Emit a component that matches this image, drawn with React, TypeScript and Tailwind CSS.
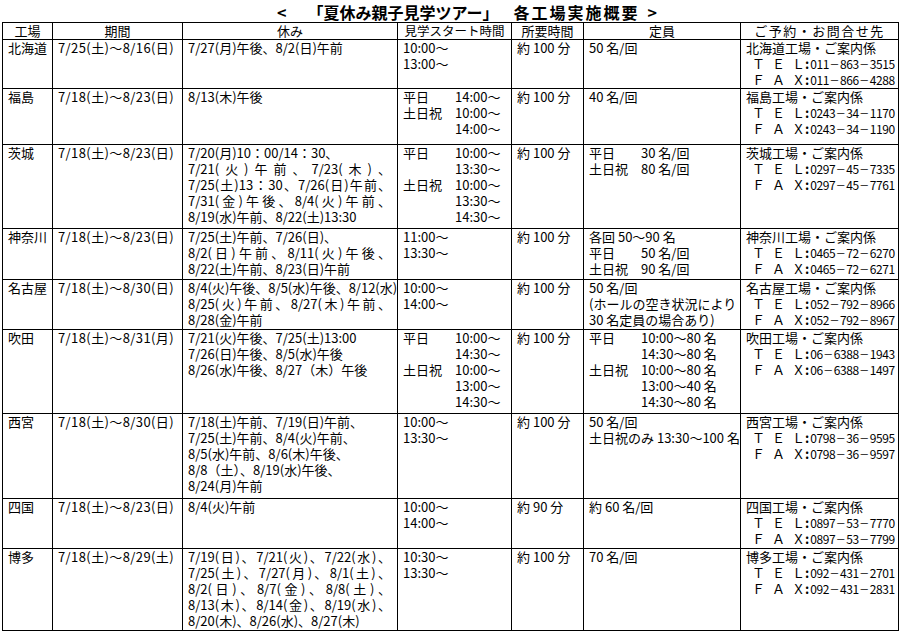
import React from "react";

type Pair = [string, string];
type HL = { t: string; j?: boolean };

interface Row {
  name: string;
  period: string;
  hol: HL[];
  times: (string | Pair)[];
  dur: string;
  cap: (string | Pair)[];
  co: [string, string, string];
  hc: string;
}

const rows: Row[] = [
  {
    name: "北海道",
    period: "7/25(土)～8/16(日)",
    hol: [{ t: "7/27(月)午後、8/2(日)午前" }],
    times: ["10:00～", "13:00～"],
    dur: "約 100 分",
    cap: ["50 名/回"],
    co: ["北海道工場・ご案内係", "011－863－3515", "011－866－4288"],
    hc: "h-[49px]",
  },
  {
    name: "福島",
    period: "7/18(土)～8/23(日)",
    hol: [{ t: "8/13(木)午後" }],
    times: [["平日", "14:00～"], ["土日祝", "10:00～"], ["", "14:00～"]],
    dur: "約 100 分",
    cap: ["40 名/回"],
    co: ["福島工場・ご案内係", "0243－34－1170", "0243－34－1190"],
    hc: "h-[56px]",
  },
  {
    name: "茨城",
    period: "7/18(土)～8/23(日)",
    hol: [
      { t: "7/20(月)10：00/14：30、" },
      { t: "7/21(火)午前、7/23(木)、", j: true },
      { t: "7/25(土)13：30、7/26(日)午前、", j: true },
      { t: "7/31(金)午後、8/4(火)午前、", j: true },
      { t: "8/19(水)午前、8/22(土)13:30" },
    ],
    times: [["平日", "10:00～"], ["", "13:30～"], ["土日祝", "10:00～"], ["", "13:30～"], ["", "14:30～"]],
    dur: "約 100 分",
    cap: [["平日", "30 名/回"], ["土日祝", "80 名/回"]],
    co: ["茨城工場・ご案内係", "0297－45－7335", "0297－45－7761"],
    hc: "h-[84px]",
  },
  {
    name: "神奈川",
    period: "7/18(土)～8/23(日)",
    hol: [
      { t: "7/25(土)午前、7/26(日)、" },
      { t: "8/2(日)午前、8/11(火)午後、", j: true },
      { t: "8/22(土)午前、8/23(日)午前" },
    ],
    times: ["11:00～", "13:30～"],
    dur: "約 100 分",
    cap: ["各回 50～90 名", ["平日", "50 名/回"], ["土日祝", "90 名/回"]],
    co: ["神奈川工場・ご案内係", "0465－72－6270", "0465－72－6271"],
    hc: "h-[51px]",
  },
  {
    name: "名古屋",
    period: "7/18(土)～8/30(日)",
    hol: [
      { t: "8/4(火)午後、8/5(水)午後、8/12(水)" },
      { t: "8/25(火)午前、8/27(木)午前、", j: true },
      { t: "8/28(金)午前" },
    ],
    times: ["10:00～", "14:00～"],
    dur: "約 100 分",
    cap: ["50 名/回", "(ホールの空き状況により", "30 名定員の場合あり)"],
    co: ["名古屋工場・ご案内係", "052－792－8966", "052－792－8967"],
    hc: "h-[50px]",
  },
  {
    name: "吹田",
    period: "7/18(土)～8/31(月)",
    hol: [
      { t: "7/21(火)午後、7/25(土)13:00" },
      { t: "7/26(日)午後、8/5(水)午後" },
      { t: "8/26(水)午後、8/27（木）午後" },
    ],
    times: [["平日", "10:00～"], ["", "14:30～"], ["土日祝", "10:00～"], ["", "13:00～"], ["", "14:30～"]],
    dur: "約 100 分",
    cap: [["平日", "10:00～80 名"], ["", "14:30～80 名"], ["土日祝", "10:00～80 名"], ["", "13:00～40 名"], ["", "14:30～80 名"]],
    co: ["吹田工場・ご案内係", "06－6388－1943", "06－6388－1497"],
    hc: "h-[84px]",
  },
  {
    name: "西宮",
    period: "7/18(土)～8/30(日)",
    hol: [
      { t: "7/18(土)午前、7/19(日)午前、" },
      { t: "7/25(土)午前、8/4(火)午前、" },
      { t: "8/5(水)午前、8/6(木)午後、" },
      { t: "8/8（土）、8/19(水)午後、" },
      { t: "8/24(月)午前" },
    ],
    times: ["10:00～", "13:30～"],
    dur: "約 100 分",
    cap: ["50 名/回", "土日祝のみ 13:30～100 名"],
    co: ["西宮工場・ご案内係", "0798－36－9595", "0798－36－9597"],
    hc: "h-[85px]",
  },
  {
    name: "四国",
    period: "7/18(土)～8/23(日)",
    hol: [{ t: "8/4(火)午前" }],
    times: ["10:00～", "14:00～"],
    dur: "約 90 分",
    cap: ["約 60 名/回"],
    co: ["四国工場・ご案内係", "0897－53－7770", "0897－53－7799"],
    hc: "h-[50px]",
  },
  {
    name: "博多",
    period: "7/18(土)～8/29(土)",
    hol: [
      { t: "7/19(日)、7/21(火)、7/22(水)、", j: true },
      { t: "7/25(土)、7/27(月)、8/1(土)、", j: true },
      { t: "8/2(日)、8/7(金)、8/8(土)、", j: true },
      { t: "8/13(木)、8/14(金)、8/19(水)、", j: true },
      { t: "8/20(木)、8/26(水)、8/27(木)" },
    ],
    times: ["10:30～", "13:30～"],
    dur: "約 100 分",
    cap: ["70 名/回"],
    co: ["博多工場・ご案内係", "092－431－2701", "092－431－2831"],
    hc: "h-[82px]",
  },
];

function Lines({ items }: { items: (string | Pair)[] }) {
  return (
    <div className="grid grid-cols-[52px_1fr]">
      {items.map((it, i) =>
        typeof it === "string" ? (
          <div key={i} className="col-span-2">
            {it}
          </div>
        ) : (
          <React.Fragment key={i}>
            <div>{it[0]}</div>
            <div>{it[1]}</div>
          </React.Fragment>
        )
      )}
    </div>
  );
}

function Phone({ n }: { n: string }) {
  const parts = n.split("－");
  return (
    <span className="text-[12px] inline-flex items-center">
      {parts.map((p, i) => (
        <React.Fragment key={i}>
          {i > 0 && (
            <span className="inline-flex w-[11px] justify-center text-[10px]">－</span>
          )}
          <span className="tracking-[-0.4px]">{p}</span>
        </React.Fragment>
      ))}
    </span>
  );
}

function Contact({ co }: { co: [string, string, string] }) {
  return (
    <div>
      <div>{co[0]}</div>
      <div className="flex items-center h-[16px]">
        <span className="ml-[6px] tracking-[7px]">ＴＥ</span>
        <span>Ｌ</span>
        <span className="font-bold mr-[1px]">:</span>
        <Phone n={co[1]} />
      </div>
      <div className="flex items-center h-[16px]">
        <span className="ml-[6px] tracking-[7px]">ＦＡ</span>
        <span>Ｘ</span>
        <span className="font-bold mr-[1px]">:</span>
        <Phone n={co[2]} />
      </div>
    </div>
  );
}

const td = "border border-black align-top pl-[5px] pr-[4px] py-0 whitespace-nowrap";
const th = "border border-black align-middle text-center p-0 font-normal whitespace-nowrap";

export default function App() {
  return (
    <div className="w-[900px] h-[632px] bg-white text-black font-['Noto_Sans_CJK_JP',sans-serif] overflow-hidden">
      <div className="h-[22px] flex items-center pt-[3px] pl-[277px] text-[16px] font-bold leading-[19px]">
        <span>&lt;</span>
        <span className="ml-[21px]">「夏休み親子見学ツアー」</span>
        <span className="ml-[15px] tracking-[2px]">各工場実施概要</span>
        <span className="ml-[8px]">&gt;</span>
      </div>
      <table className="ml-[2px] w-[896px] table-fixed border-collapse text-[13px] leading-[16px]">
        <colgroup>
          <col className="w-[50px]" />
          <col className="w-[130px]" />
          <col className="w-[215px]" />
          <col className="w-[114px]" />
          <col className="w-[72px]" />
          <col className="w-[157px]" />
          <col className="w-[158px]" />
        </colgroup>
        <thead>
          <tr className="h-[17px]">
            <th className={th}>工場</th>
            <th className={th}>期間</th>
            <th className={th}>休み</th>
            <th className={`${th} text-[12.5px]`}>見学スタート時間</th>
            <th className={th}>所要時間</th>
            <th className={th}>定員</th>
            <th className={`${th} tracking-[1.5px]`}>ご予約・お問合せ先</th>
          </tr>
        </thead>
        <tbody>
          {rows.map((r) => (
            <tr key={r.name} className={r.hc}>
              <td className={td}>{r.name}</td>
              <td className={`${td} tracking-[0.4px]`}>{r.period}</td>
              <td className={td}>
                {r.hol.map((h, i) => (
                  <div key={i} className={h.j ? "[text-align-last:justify] pr-[2px]" : ""}>
                    {h.t}
                  </div>
                ))}
              </td>
              <td className={td}>
                <Lines items={r.times} />
              </td>
              <td className={td}>{r.dur}</td>
              <td className={td}>
                <Lines items={r.cap} />
              </td>
              <td className={td}>
                <Contact co={r.co} />
              </td>
            </tr>
          ))}
        </tbody>
      </table>
    </div>
  );
}
